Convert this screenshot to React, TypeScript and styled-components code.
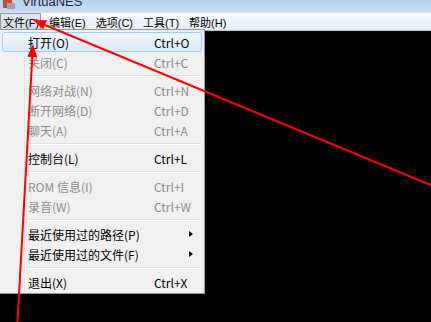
import React from 'react';
import styled, { createGlobalStyle } from 'styled-components';

const GlobalStyle = createGlobalStyle`
    html, body {
        margin: 0;
        padding: 0;
        background: #000;
        overflow: hidden;
    }
`;

const FONT = `"Noto Sans CJK SC", "Liberation Sans", sans-serif`;

const Window = styled.div`
    position: relative;
    width: 431px;
    height: 322px;
    display: flex;
    flex-direction: column;
    background: #000;
    font-family: ${FONT};
    overflow: hidden;
`;

const TitleBar = styled.div`
    height: 12px;
    display: flex;
    align-items: flex-start;
    gap: 6px;
    padding-left: 2px;
    background: linear-gradient(#b9d1ea, #c9dcf0);
    overflow: hidden;
`;

const TitleText = styled.span`
    font-family: "Liberation Sans", sans-serif;
    font-size: 13px;
    line-height: 16px;
    margin-top: -6px;
    color: #1b2b40;
`;

const MenuBar = styled.div`
    height: 17px;
    display: flex;
    align-items: stretch;
    background: linear-gradient(#fbfcfe, #e6ecf4);
    border-top: 1px solid #dfe6ee;
    border-bottom: 1px solid #b8c4d2;
`;

const MenuTitle = styled.div<{ $open?: boolean }>`
    display: flex;
    align-items: center;
    padding: 0 1px 0 2px;
    margin-right: 5px;
    font-family: "Liberation Sans", "Noto Sans CJK SC", sans-serif;
    font-size: 11px;
    color: #000;
    box-sizing: border-box;
    border: 1px solid ${(p) => (p.$open ? '#8e9aa8' : 'transparent')};
    background: ${(p) => (p.$open ? 'linear-gradient(#e4e9ef, #d4dbe4)' : 'transparent')};
`;

const Screen = styled.div`
    flex: 1;
    background: #000;
`;

const Dropdown = styled.div`
    position: absolute;
    top: 29px;
    left: 0;
    width: 204px;
    padding: 2px 0 1px;
    background: #f0f0f0;
    border: 1px solid #979797;
    border-left: none;
    box-shadow: 2px 2px 2px rgba(0, 0, 0, 0.35);
`;

const Gutter = styled.div`
    position: absolute;
    top: 2px;
    bottom: 2px;
    left: 24px;
    width: 1px;
    background: #e2e3e3;
    border-right: 1px solid #fff;
`;

const Item = styled.div<{ $active?: boolean; $disabled?: boolean }>`
    position: relative;
    height: 20px;
    margin: 0 2px;
    display: flex;
    align-items: center;
    font-size: 12px;
    color: ${(p) => (p.$disabled ? '#8d8d8d' : '#000')};
    box-sizing: border-box;
    border: 1px solid ${(p) => (p.$active ? '#a8c8ee' : 'transparent')};
    border-radius: 3px;
    background: ${(p) => (p.$active ? 'linear-gradient(#f1f6fd, #dde9f8)' : 'transparent')};
`;

const Label = styled.span`
    padding-left: 25px;
    width: 126px;
    white-space: nowrap;
`;

const Shortcut = styled.span`
    white-space: nowrap;
`;

const SubArrow = styled.span`
    margin-left: auto;
    margin-right: 8px;
    width: 0;
    height: 0;
    border-top: 3px solid transparent;
    border-bottom: 3px solid transparent;
    border-left: 4px solid #000;
`;

const Separator = styled.div`
    height: 8px;
    display: flex;
    align-items: center;
    padding-left: 27px;
    padding-right: 3px;

    &::after {
        content: '';
        flex: 1;
        height: 1px;
        background: #e0e0e0;
        border-bottom: 1px solid #fff;
    }
`;

const Overlay = styled.svg`
    position: absolute;
    top: 0;
    left: 0;
    pointer-events: none;
`;

type Entry =
    | { sep: true }
    | { sep?: false; label: string; key?: string; sub?: boolean; disabled?: boolean; active?: boolean };

const entries: Entry[] = [
    { label: '打开(O)', key: 'Ctrl+O', active: true },
    { label: '关闭(C)', key: 'Ctrl+C', disabled: true },
    { sep: true },
    { label: '网络对战(N)', key: 'Ctrl+N', disabled: true },
    { label: '断开网络(D)', key: 'Ctrl+D', disabled: true },
    { label: '聊天(A)', key: 'Ctrl+A', disabled: true },
    { sep: true },
    { label: '控制台(L)', key: 'Ctrl+L' },
    { sep: true },
    { label: 'ROM 信息(I)', key: 'Ctrl+I', disabled: true },
    { label: '录音(W)', key: 'Ctrl+W', disabled: true },
    { sep: true },
    { label: '最近使用过的路径(P)', sub: true },
    { label: '最近使用过的文件(F)', sub: true },
    { sep: true },
    { label: '退出(X)', key: 'Ctrl+X' },
];

const menus = ['文件(F)', '编辑(E)', '选项(C)', '工具(T)', '帮助(H)'];

const Arrow: React.FC<{ x1: number; y1: number; x2: number; y2: number }> = ({ x1, y1, x2, y2 }) => {
    const a = Math.atan2(y2 - y1, x2 - x1);
    const len = 13;
    const w = 5;
    const bx = x2 - Math.cos(a) * len;
    const by = y2 - Math.sin(a) * len;
    const px = -Math.sin(a) * w;
    const py = Math.cos(a) * w;
    return (
        <g>
            <line x1={x1} y1={y1} x2={bx} y2={by} stroke="#f00" strokeWidth={2} />
            <polygon points={`${x2},${y2} ${bx + px},${by + py} ${bx - px},${by - py}`} fill="#f00" />
        </g>
    );
};

const App: React.FC = () => {
    return (
        <>
            <GlobalStyle />
            <Window>
                <TitleBar>
                    <svg width="14" height="12" viewBox="0 0 14 12">
                        <rect x="1" y="0" width="9" height="8" fill="#c8463c" />
                        <rect x="5" y="3" width="8" height="6" fill="#9aa3ad" />
                    </svg>
                    <TitleText>VirtuaNES</TitleText>
                </TitleBar>
                <MenuBar>
                    {menus.map((m, i) => (
                        <MenuTitle key={m} $open={i === 0}>
                            {m}
                        </MenuTitle>
                    ))}
                </MenuBar>
                <Screen />
                <Dropdown>
                    <Gutter />
                    {entries.map((e, i) =>
                        e.sep ? (
                            <Separator key={i} />
                        ) : (
                            <Item key={i} $active={e.active} $disabled={e.disabled}>
                                <Label>{e.label}</Label>
                                {e.key && <Shortcut>{e.key}</Shortcut>}
                                {e.sub && <SubArrow />}
                            </Item>
                        )
                    )}
                </Dropdown>
                <Overlay width="431" height="322" viewBox="0 0 431 322">
                    <Arrow x1={445} y1={191} x2={33} y2={20} />
                    <Arrow x1={17} y1={330} x2={33} y2={44} />
                </Overlay>
            </Window>
        </>
    );
};

export default App;
